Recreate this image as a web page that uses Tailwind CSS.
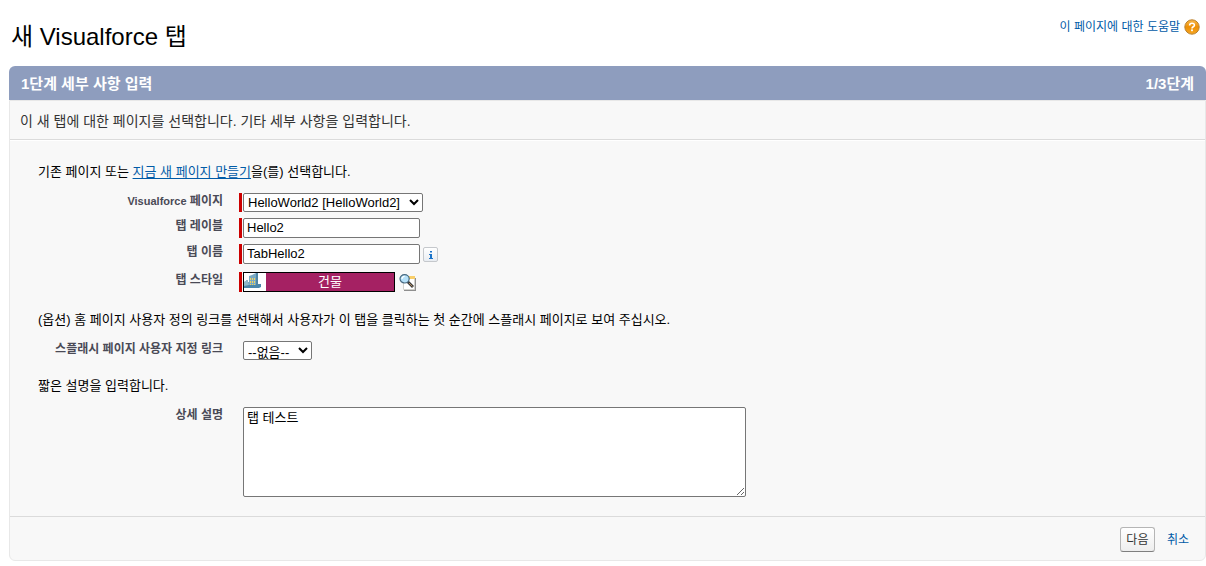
<!DOCTYPE html>
<html lang="ko">
<head>
    <meta charset="UTF-8">
    <meta name="viewport" content="width=device-width, initial-scale=1.0">
    <title>새 Visualforce 탭</title>
    <script src="https://cdn.jsdelivr.net/npm/@tailwindcss/browser@4"></script>
</head>
<body class="bg-white pl-[9px] text-[13px] leading-5 text-black font-['Liberation_Sans','Noto_Sans_CJK_KR',sans-serif]">
    <header class="flex h-[66px] items-start justify-between pl-[2px] pr-[6px]">
        <h1 class="pt-[21px] text-2xl leading-8">새 Visualforce 탭</h1>
        <a href="#" class="flex items-center gap-1 pt-[17px] text-xs leading-5 text-[#015ba7]">
            이 페이지에 대한 도움말
            <svg class="size-4" viewBox="0 0 16 16" aria-hidden="true">
                <defs>
                    <linearGradient id="help" x1="0" y1="0" x2="0" y2="1">
                        <stop offset="0" stop-color="#f8b84a"/>
                        <stop offset=".5" stop-color="#ee9005"/>
                        <stop offset="1" stop-color="#f6a623"/>
                    </linearGradient>
                </defs>
                <circle cx="8" cy="8" r="7.2" fill="url(#help)" stroke="#b9812f" stroke-width="1"/>
                <path d="M5.6 6.4C5.6 3.5 10.4 3.6 10.4 6.2C10.4 7.8 8 7.7 8 9.4" fill="none" stroke="#fff" stroke-width="1.6"/>
                <rect x="7.1" y="10.4" width="1.8" height="1.8" fill="#fff"/>
            </svg>
        </a>
    </header>

    <form>
        <div class="flex h-[34px] items-center justify-between rounded-t-md bg-[#8e9dbe] px-3 pt-px text-[15px] font-bold text-white">
            <h2>1단계 세부 사항 입력</h2>
            <span>1/3단계</span>
        </div>

        <div class="rounded-b-md border border-[#e8e8e8] bg-[#f8f8f8]">
            <p class="border-b border-[#dbdbdb] px-[10px] pt-[10px] pb-2 text-sm text-[#333]">이 새 탭에 대한 페이지를 선택합니다. 기타 세부 사항을 입력합니다.</p>

            <div class="border-t border-white px-7 pt-[21px] pb-[19px]">
                <p>기존 페이지 또는 <a href="#" class="text-[#015ba7] underline underline-offset-2">지금 새 페이지 만들기</a>을(를) 선택합니다.</p>

                <div class="mt-[11px] flex items-start gap-4">
                    <label for="page" class="w-[185px] text-right text-xs leading-4 font-bold text-[#4a4a56]"><span class="text-[11px]">Visualforce</span> 페이지</label>
                    <div class="flex border-l-3 border-[#c00] pl-px">
                        <select id="page" class="h-[19px] w-[180px] rounded-xs border border-[#767676] bg-white text-[13px] leading-4">
                            <option>HelloWorld2 [HelloWorld2]</option>
                        </select>
                    </div>
                </div>
                <div class="mt-[6px] flex items-start gap-4">
                    <label for="label" class="w-[185px] text-right text-xs leading-4 font-bold text-[#4a4a56]">탭 레이블</label>
                    <div class="flex border-l-3 border-[#c00] pl-px">
                        <input id="label" type="text" value="Hello2" class="h-5 w-[177px] rounded-xs border border-[#767676] bg-white px-[3px] pb-[2px] text-[13px] leading-4">
                    </div>
                </div>
                <div class="mt-[6px] flex items-start gap-4">
                    <label for="name" class="w-[185px] text-right text-xs leading-4 font-bold text-[#4a4a56]">탭 이름</label>
                    <div class="flex gap-[3px]">
                        <div class="flex border-l-3 border-[#c00] pl-px">
                            <input id="name" type="text" value="TabHello2" class="h-5 w-[177px] rounded-xs border border-[#767676] bg-white px-[3px] pb-[2px] text-[13px] leading-4">
                        </div>
                        <button type="button" aria-label="정보" class="mt-[3px] size-[15px] rounded-xs border border-[#c5c8cc] bg-linear-to-b from-white to-[#e9edf2]">
                            <svg class="size-[13px]" viewBox="0 0 13 13" aria-hidden="true">
                                <path d="M6 3h2v1.6H6zM5 6h3v4h1v1H5v-1h1V7H5z" fill="#1a73c9"/>
                            </svg>
                        </button>
                    </div>
                </div>
                <div class="mt-2 flex items-start gap-4">
                    <label for="style" class="w-[185px] text-right text-xs leading-4 font-bold text-[#4a4a56]">탭 스타일</label>
                    <div class="flex gap-1">
                        <div class="flex border-l-3 border-[#c00] pl-px">
                            <div class="flex h-5 w-[152px] border border-black bg-white">
                                <svg class="h-[18px] w-[22px]" viewBox="0 0 22 18" aria-hidden="true">
                                    <path d="M0 15V9l2-1V7h2v2h1V3l3-1 4-2h2v11h3v3h-2v1z" fill="#79a9c2"/>
                                    <path d="M0 15V9l2-1V7h2v3l1 2v3z" fill="#8fb8c8"/>
                                    <path d="M12 0h2v11h3v3h-5z" fill="#4f86a6"/>
                                    <path d="M0 15v-2l5-1h12v2l-2 1z" fill="#4a86aa"/>
                                    <path d="M6 5h1v2H6zM8 5h1v2H8zM10 5h1v2h-1zM6 8h1v2H6zM8 8h1v2H8zM10 8h1v2h-1zM6 11h1v1H6zM8 11h1v1H8zM10 11h1v1h-1z" fill="#f3d35c"/>
                                </svg>
                                <input id="style" type="text" readonly value="건물" class="min-w-0 flex-1 bg-[#a52163] pb-px text-center text-[13px] leading-4 text-white">
                            </div>
                        </div>
                        <button type="button" aria-label="탭 스타일 조회" class="mt-[1px] h-[18px] w-[18px]">
                            <svg class="size-[18px]" viewBox="0 0 18 18" aria-hidden="true">
                                <path d="M5 16h11V5h1v13H5z" fill="#8f8f8f"/>
                                <path d="M4.500 3.500h11v13h-11z" fill="#fff" stroke="#d2d2cc"/>
                                <path d="M9 3h7v3H9z" fill="#f9cf6b"/>
                                <path d="M8.500 8.500l5.500 5.500" stroke="#3c3c3c" stroke-width="2.800"/>
                                <path d="M10 10l3.500 3.500" stroke="#b58f60" stroke-width="1"/>
                                <ellipse cx="5.600" cy="5.800" rx="4.600" ry="4.200" fill="#b5e0f8" stroke="#46687f" stroke-width="1.200"/>
                                <path d="M3 6a2.600 2.600 0 0 1 2.600-2.600" fill="none" stroke="#fff" stroke-width="1.200"/>
                            </svg>
                        </button>
                    </div>
                </div>

                <p class="mt-[18px]">(옵션) 홈 페이지 사용자 정의 링크를 선택해서 사용자가 이 탭을 클릭하는 첫 순간에 스플래시 페이지로 보여 주십시오.</p>
                <div class="mt-[11px] flex items-start gap-5">
                    <label for="splash" class="w-[185px] text-right text-xs leading-4 font-bold text-[#4a4a56]">스플래시 페이지 사용자 지정 링크</label>
                    <select id="splash" class="h-[19px] w-[69px] rounded-xs border border-[#767676] bg-white pt-[2px] text-[13px] leading-4">
                        <option>--없음--</option>
                    </select>
                </div>

                <p class="mt-4">짧은 설명을 입력합니다.</p>
                <div class="mt-[11px] flex items-start gap-5">
                    <label for="description" class="w-[185px] text-right text-xs leading-4 font-bold text-[#4a4a56]">상세 설명</label>
                    <textarea id="description" class="h-[90px] w-[503px] rounded-xs border border-[#767676] bg-white px-[3px] py-[2px] text-[13px] leading-4">탭 테스트</textarea>
                </div>
            </div>

            <div class="flex items-center justify-end gap-3 border-t border-[#dbdbdb] pt-[10px] pr-4 pb-2 text-xs">
                <button type="button" class="h-[25px] w-[35px] rounded-[3px] border border-[#b5b5b5] border-b-[#7f7f7f] bg-linear-to-b from-white to-[#eee] text-[#333]">다음</button>
                <a href="#" class="text-[#015ba7]">취소</a>
            </div>
        </div>
    </form>
</body>
</html>
